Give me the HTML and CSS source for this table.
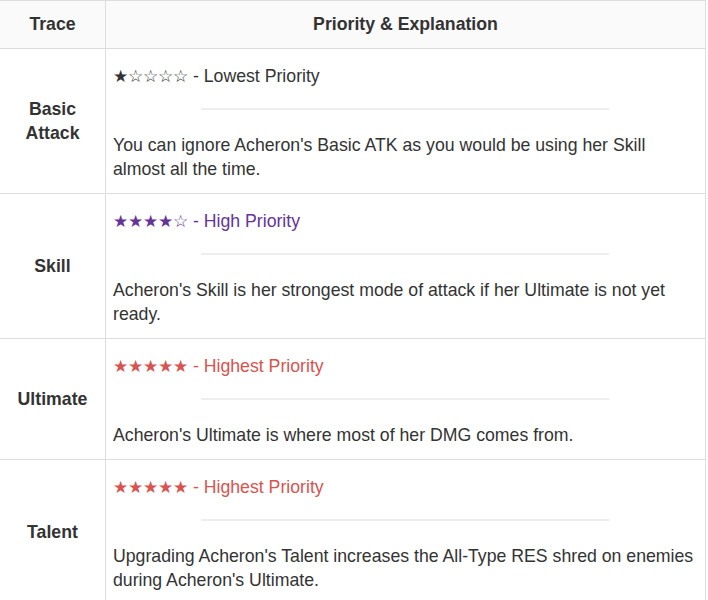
FILE: index.html
```html
<!DOCTYPE html>
<html>
<head>
<meta charset="utf-8">
<link rel="stylesheet" href="styles.css">
</head>
<body>
<table class="trace-table">
  <thead>
    <tr>
      <th class="col-trace">Trace</th>
      <th class="col-prio">Priority &amp; Explanation</th>
    </tr>
  </thead>
  <tbody>
    <tr>
      <td class="trace-name">Basic Attack</td>
      <td class="prio-cell">
        <div class="prio prio-low"><span class="stars">★☆☆☆☆</span> - Lowest Priority</div>
        <div class="sep"></div>
        <p class="desc">You can ignore Acheron's Basic ATK as you would be using her Skill almost all the time.</p>
      </td>
    </tr>
    <tr>
      <td class="trace-name">Skill</td>
      <td class="prio-cell">
        <div class="prio prio-high"><span class="stars">★★★★☆</span> - High Priority</div>
        <div class="sep"></div>
        <p class="desc">Acheron's Skill is her strongest mode of attack if her Ultimate is not yet ready.</p>
      </td>
    </tr>
    <tr>
      <td class="trace-name">Ultimate</td>
      <td class="prio-cell">
        <div class="prio prio-top"><span class="stars">★★★★★</span> - Highest Priority</div>
        <div class="sep"></div>
        <p class="desc">Acheron's Ultimate is where most of her DMG comes from.</p>
      </td>
    </tr>
    <tr>
      <td class="trace-name">Talent</td>
      <td class="prio-cell">
        <div class="prio prio-top"><span class="stars">★★★★★</span> - Highest Priority</div>
        <div class="sep"></div>
        <p class="desc">Upgrading Acheron's Talent increases the All-Type RES shred on enemies during Acheron's Ultimate.</p>
      </td>
    </tr>
  </tbody>
</table>
</body>
</html>
```

FILE: styles.css
```css
html, body {
  margin: 0;
  padding: 0;
  background: #fff;
}
body {
  font-family: "Liberation Sans", Arial, sans-serif;
  font-size: 17.7px;
  color: #333;
}
.trace-table {
  border-collapse: collapse;
  width: 707px;
  margin-left: -1px;
}
.trace-table th,
.trace-table td {
  border: 1px solid #ddd;
}
.trace-table th {
  background: #fafafa;
  font-weight: bold;
  line-height: 24px;
  padding: 11px 8px 12px;
  text-align: center;
  color: #333;
}
.col-trace {
  width: 89px;
}
.trace-name {
  text-align: center;
  vertical-align: middle;
  font-weight: bold;
  line-height: 24px;
  padding: 8px;
}
.prio-cell {
  vertical-align: top;
  padding: 15px 8px 12px 7px;
  line-height: 24px;
}
.prio {
  line-height: 24px;
  height: 24px;
  overflow: visible;
}
.stars {
  font-size: 16.7px;
  line-height: 1;
}
.prio-low { color: #333; }
.prio-high { color: #663399; }
.prio-top { color: #d9534f; }
.sep {
  width: 70%;
  height: 2px;
  background: #eee;
  margin: 20px auto 23px;
}
.desc {
  margin: 0;
  line-height: 24px;
}
```
